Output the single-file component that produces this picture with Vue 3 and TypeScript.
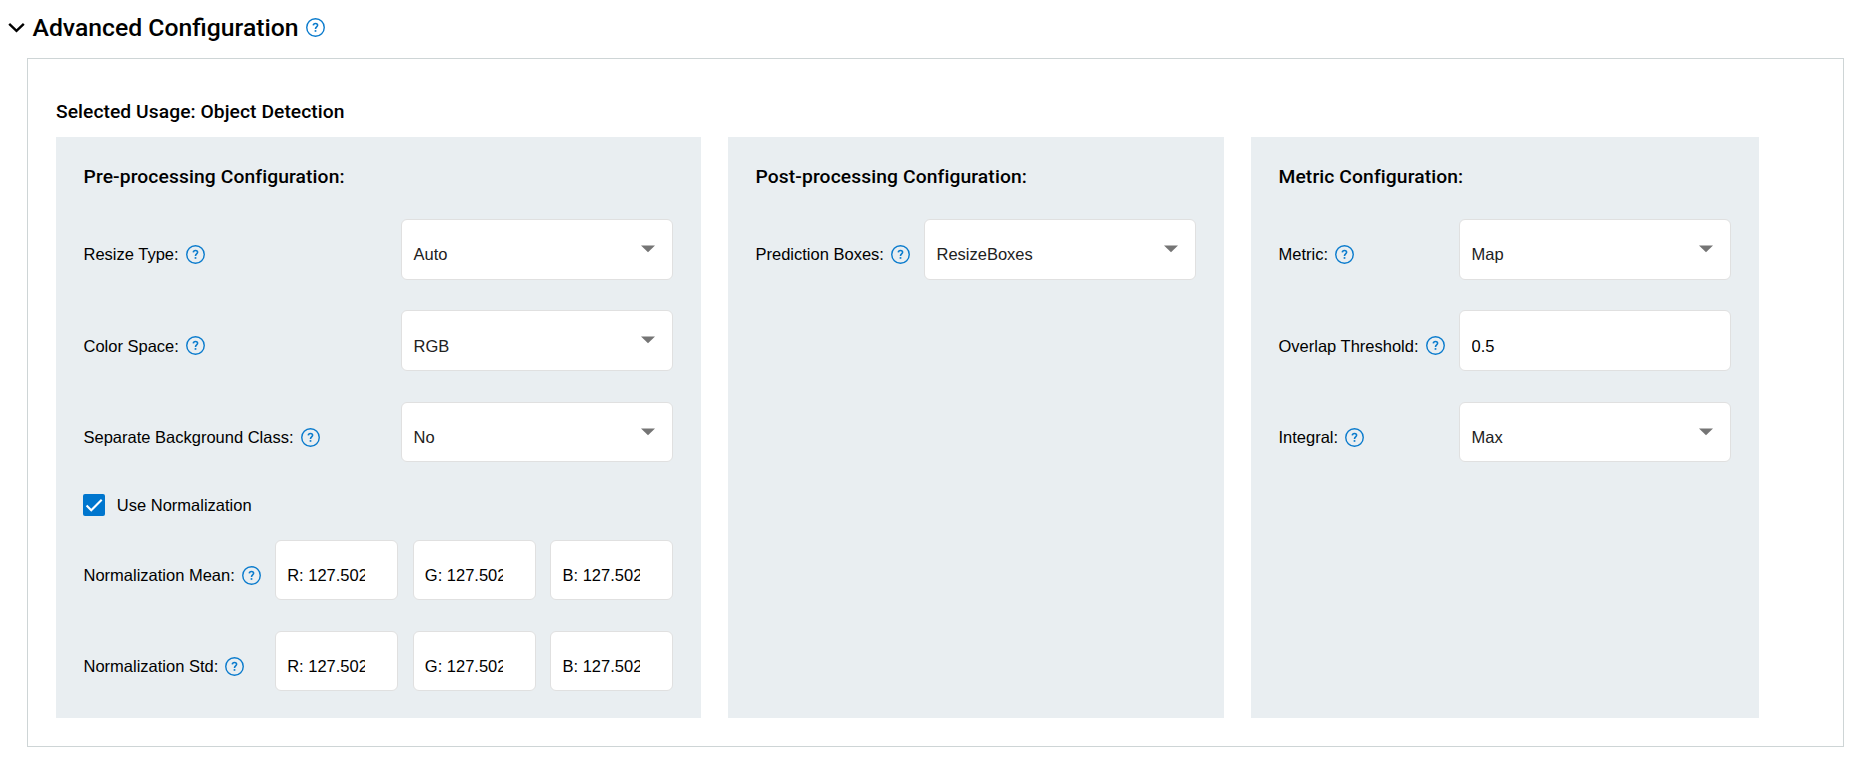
<script setup lang="ts">
import { defineComponent, h, ref } from 'vue'

interface Field {
  label: string
  value: string
  kind: 'select' | 'input'
}

interface Channel {
  label: string
  values: string[]
}

const HelpIcon = defineComponent({
  setup: () => () =>
    h('svg', { class: 'help-icon', viewBox: '0 0 19 19', width: 19, height: 19, fill: 'none', stroke: '#0a7bcd' }, [
      h('circle', { cx: 9.5, cy: 9.5, r: 8.75, 'stroke-width': 1.4 }),
      h('path', { d: 'M7.3 7.4C7.4 6.1 8.3 5.5 9.5 5.5C10.8 5.5 11.6 6.2 11.6 7.3C11.6 8.9 9.5 9 9.5 10.9', 'stroke-width': 1.6 }),
      h('path', { d: 'M9.5 12.1V13.8', 'stroke-width': 1.7 }),
    ]),
})

const preFields = ref<Field[]>([
  { label: 'Resize Type:', value: 'Auto', kind: 'select' },
  { label: 'Color Space:', value: 'RGB', kind: 'select' },
  { label: 'Separate Background Class:', value: 'No', kind: 'select' },
])
const postFields = ref<Field[]>([{ label: 'Prediction Boxes:', value: 'ResizeBoxes', kind: 'select' }])
const metricFields = ref<Field[]>([
  { label: 'Metric:', value: 'Map', kind: 'select' },
  { label: 'Overlap Threshold:', value: '0.5', kind: 'input' },
  { label: 'Integral:', value: 'Max', kind: 'select' },
])
const panels = [
  { title: 'Pre-processing Configuration:', fields: preFields, normalization: true },
  { title: 'Post-processing Configuration:', fields: postFields, normalization: false },
  { title: 'Metric Configuration:', fields: metricFields, normalization: false },
]
const channels = ref<Channel[]>([
  { label: 'Normalization Mean:', values: ['R: 127.502', 'G: 127.502', 'B: 127.502'] },
  { label: 'Normalization Std:', values: ['R: 127.502', 'G: 127.502', 'B: 127.502'] },
])
const open = ref(true)
const useNormalization = ref(true)
</script>

<template>
  <main class="page">
    <header class="title" @click="open = !open">
      <svg class="chevron" width="17" height="12" viewBox="0 0 17 12" fill="none" stroke="#000" stroke-width="2.4">
        <path d="M1.2 1.8L8.5 8.8L15.8 1.8" />
      </svg>
      <h1>Advanced Configuration</h1>
      <HelpIcon />
    </header>
    <section v-if="open" class="frame">
      <h2>Selected Usage: Object Detection</h2>
      <div class="panels">
        <article v-for="panel in panels" :key="panel.title" class="panel">
          <h2>{{ panel.title }}</h2>
          <div class="rows">
            <div v-for="field in panel.fields.value" :key="field.label" class="row">
              <div class="label"><span>{{ field.label }}</span><HelpIcon /></div>
              <div v-if="field.kind === 'select'" class="box select">
                <span>{{ field.value }}</span>
                <svg class="arrow" width="14" height="8" viewBox="0 0 14 8"><path d="M0 0.4H14L7 7.3Z" fill="#757575" /></svg>
              </div>
              <input v-else v-model="field.value" class="box" type="text" />
            </div>
          </div>
          <template v-if="panel.normalization">
            <div class="check" @click="useNormalization = !useNormalization">
              <span class="checkbox" :class="{ on: useNormalization }">
                <svg v-if="useNormalization" width="22" height="22" viewBox="0 0 24 24" fill="none" stroke="#fff" stroke-width="2.3">
                  <path d="M3.9 12.6L9 17.8L20.4 6.3" />
                </svg>
              </span>
              <span>Use Normalization</span>
            </div>
            <div v-if="useNormalization" class="rows">
              <div v-for="channel in channels" :key="channel.label" class="row">
                <div class="label"><span>{{ channel.label }}</span><HelpIcon /></div>
                <div class="triple">
                  <input v-for="(_, i) in channel.values" :key="i" v-model="channel.values[i]" class="box" type="text" />
                </div>
              </div>
            </div>
          </template>
        </article>
      </div>
    </section>
  </main>
</template>

<style>
body {
  margin: 0;
  background: #fff;
}
</style>

<style scoped>
.page {
  box-sizing: border-box;
  width: 1860px;
  height: 761px;
  padding: 0 16px 0 8px;
  overflow: hidden;
  color: #000;
  font: 16.5px/20px "Liberation Sans", Arial, sans-serif;
}
h1,
h2 {
  margin: 0;
  font-family: Roboto, sans-serif;
  font-weight: 500;
}
h1 {
  font-size: 24.75px;
  line-height: 30px;
}
h2 {
  font-size: 19.25px;
  line-height: 24px;
  letter-spacing: 0.06px;
}
.title {
  display: flex;
  align-items: center;
  height: 58px;
  padding-bottom: 3px;
  box-sizing: border-box;
}
.chevron {
  margin-right: 7.5px;
}
.title .help-icon {
  margin-left: 7.5px;
}
.help-icon {
  flex: none;
}
.frame {
  box-sizing: border-box;
  height: 689px;
  margin-left: 19px;
  padding: 41px 0 0 28px;
  border: 1px solid #ced5d6;
}
.panels {
  display: grid;
  grid-template-columns: 645px 496px 508px;
  gap: 27px;
  height: 581px;
  margin-top: 13px;
}
.panel {
  box-sizing: border-box;
  padding: 28px 27.8px 0 27.5px;
  background: #e9eef1;
}
.panel h2 {
  letter-spacing: 0.11px;
}
.rows {
  display: grid;
  gap: 30.9px;
  margin-top: 30px;
}
.row {
  display: flex;
  justify-content: space-between;
  height: 60.5px;
}
.label {
  display: flex;
  align-items: center;
  gap: 7px;
  padding-top: 10.2px;
  white-space: nowrap;
}
.box {
  box-sizing: border-box;
  width: 272px;
  height: 60.5px;
  padding: 11.2px 0 0 11.3px;
  border: 1px solid #e0e0e0;
  border-radius: 6px;
  background: #fff;
  color: #000;
  font: inherit;
  outline: none;
}
.select {
  display: flex;
  align-items: center;
  justify-content: space-between;
  padding-top: 10.2px;
  padding-right: 17px;
  color: #212121;
}
.arrow {
  margin-bottom: 10.6px;
}
.check {
  display: flex;
  align-items: center;
  gap: 12px;
  margin: 31.7px 0 0 -0.7px;
}
.checkbox {
  display: block;
  box-sizing: border-box;
  width: 22px;
  height: 22px;
  border: 2px solid #0076ce;
  border-radius: 2px;
}
.checkbox.on {
  border: 0;
  background: #0076ce;
}
.checkbox svg {
  display: block;
}
.check + .rows {
  gap: 30.6px;
  margin-top: 23.9px;
}
.triple {
  display: flex;
  gap: 14.7px;
}
.triple .box {
  width: 123px;
  padding-right: 32px;
}
</style>
